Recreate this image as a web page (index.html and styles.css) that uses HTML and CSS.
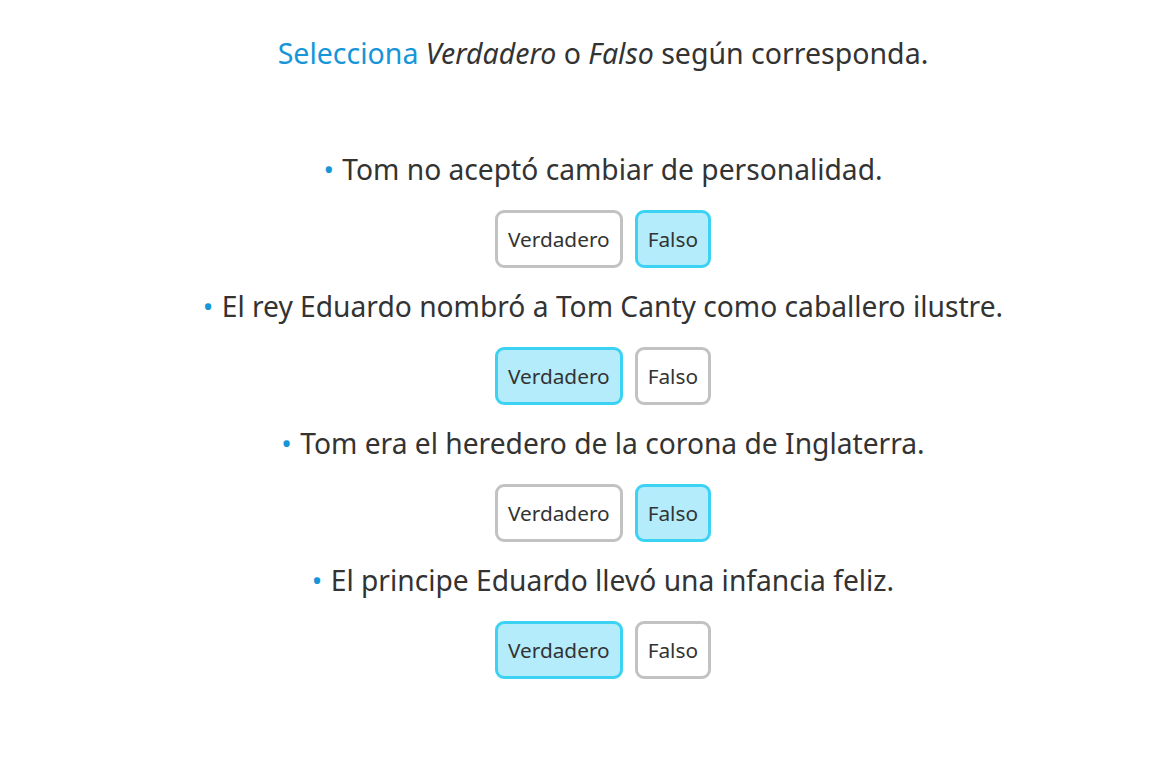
FILE: index.html
```html
<!DOCTYPE html>
<html lang="es">
<head>
<meta charset="utf-8">
<title>Verdadero o Falso</title>
<link rel="stylesheet" href="styles.css">
</head>
<body>
<main class="page">
  <p class="title"><span class="accent">Selecciona</span> <em>Verdadero</em> o <em>Falso</em> según corresponda.</p>
  <ul class="items">
    <li class="item">
      <p class="statement"><span class="dot">•</span> Tom no aceptó cambiar de personalidad.</p>
      <div class="choices">
        <button class="choice">Verdadero</button>
        <button class="choice selected">Falso</button>
      </div>
    </li>
    <li class="item">
      <p class="statement"><span class="dot">•</span> El rey Eduardo nombró a Tom Canty como caballero ilustre.</p>
      <div class="choices">
        <button class="choice selected">Verdadero</button>
        <button class="choice">Falso</button>
      </div>
    </li>
    <li class="item">
      <p class="statement"><span class="dot">•</span> Tom era el heredero de la corona de Inglaterra.</p>
      <div class="choices">
        <button class="choice">Verdadero</button>
        <button class="choice selected">Falso</button>
      </div>
    </li>
    <li class="item">
      <p class="statement"><span class="dot">•</span> El principe Eduardo llevó una infancia feliz.</p>
      <div class="choices">
        <button class="choice selected">Verdadero</button>
        <button class="choice">Falso</button>
      </div>
    </li>
  </ul>
</main>
</body>
</html>
```
FILE: styles.css
```css
html, body {
  margin: 0;
  padding: 0;
  background: #ffffff;
}
body {
  font-family: "Noto Sans", "Open Sans", sans-serif;
  color: #333333;
}
.page {
  padding: 35px 0 0 33px;
  display: flex;
  flex-direction: column;
  align-items: center;
}
.title {
  margin: 0;
  font-size: 28.5px;
  line-height: 36px;
  text-align: center;
}
.title em {
  font-style: italic;
}
.accent {
  color: #1696d8;
}
.items {
  list-style: none;
  margin: 80px 0 0;
  padding: 0;
  display: flex;
  flex-direction: column;
  align-items: center;
}
.item {
  display: flex;
  flex-direction: column;
  align-items: center;
  height: 137px;
}
.statement {
  margin: 0;
  font-size: 28.2px;
  line-height: 36px;
  text-align: center;
}
.dot {
  color: #1696d8;
  font-size: 28px;
  margin-right: 1px;
}
.choices {
  margin-top: 23px;
  display: flex;
  gap: 12px;
}
.choice {
  font-family: inherit;
  font-size: 20.8px;
  color: #333333;
  background: #ffffff;
  border: 3px solid #c2c2c2;
  border-radius: 9px;
  height: 58px;
  padding: 0 10px;
  cursor: pointer;
}
.choice.selected {
  background: #b4ecfc;
  border-color: #3cd2f4;
}
```
